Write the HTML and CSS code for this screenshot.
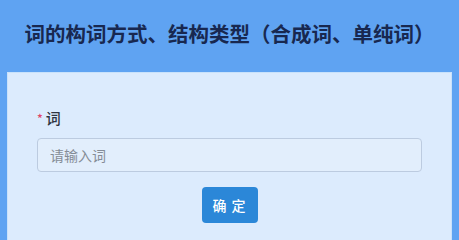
FILE: index.html
```html
<!DOCTYPE html>
<html lang="zh">
<head>
<meta charset="utf-8">
<link rel="stylesheet" href="styles.css">
</head>
<body>
<div class="page">
  <header class="head">
    <h1 class="title">词的构词方式、结构类型（合成词、单纯词）</h1>
  </header>
  <main class="panel">
    <form class="form">
      <label class="label"><span class="req">*</span>词</label>
      <input class="input" type="text" placeholder="请输入词">
      <div class="actions">
        <button class="btn" type="button">确 定</button>
      </div>
    </form>
  </main>
</div>
</body>
</html>
```
FILE: styles.css
```css
html, body {
  margin: 0;
  padding: 0;
  height: 100%;
}
body {
  background: #5fa3f2;
  font-family: "Noto Sans CJK SC", "Noto Sans", sans-serif;
  overflow: hidden;
}
.page {
  display: flex;
  flex-direction: column;
  height: 100%;
}
.head {
  height: 72px;
  box-sizing: border-box;
  padding-bottom: 6px;
  display: flex;
  align-items: center;
  justify-content: center;
}
.title {
  margin: 0;
  font-size: 20.5px;
  font-weight: 700;
  color: #182850;
  line-height: 1;
}
.panel {
  flex: 1;
  margin: 0 7px;
  background: #dcebfd;
  border: 1px solid #c9e2fb;
  border-bottom: none;
  padding: 35px 29px 0;
}
.form {
  display: flex;
  flex-direction: column;
}
.label {
  font-size: 15px;
  font-weight: 500;
  color: #2e3440;
  line-height: 20px;
  display: flex;
  align-items: center;
  gap: 3px;
}
.req {
  color: #e0466a;
  font-size: 12px;
}
.input {
  margin-top: 10px;
  height: 34px;
  box-sizing: border-box;
  border: 1px solid #bccbe0;
  border-radius: 4px;
  background: #e2eefc;
  padding: 0 12px;
  font-family: inherit;
  font-size: 14px;
  color: #333;
  outline: none;
}
.input::placeholder {
  color: #858c96;
}
.actions {
  display: flex;
  justify-content: center;
  margin-top: 15px;
}
.btn {
  width: 56px;
  height: 36px;
  border: none;
  border-radius: 4px;
  background: #2b87d8;
  color: #ffffff;
  font-family: inherit;
  font-size: 14px;
  font-weight: 500;
  letter-spacing: 1px;
  padding: 0;
  cursor: pointer;
}
```
